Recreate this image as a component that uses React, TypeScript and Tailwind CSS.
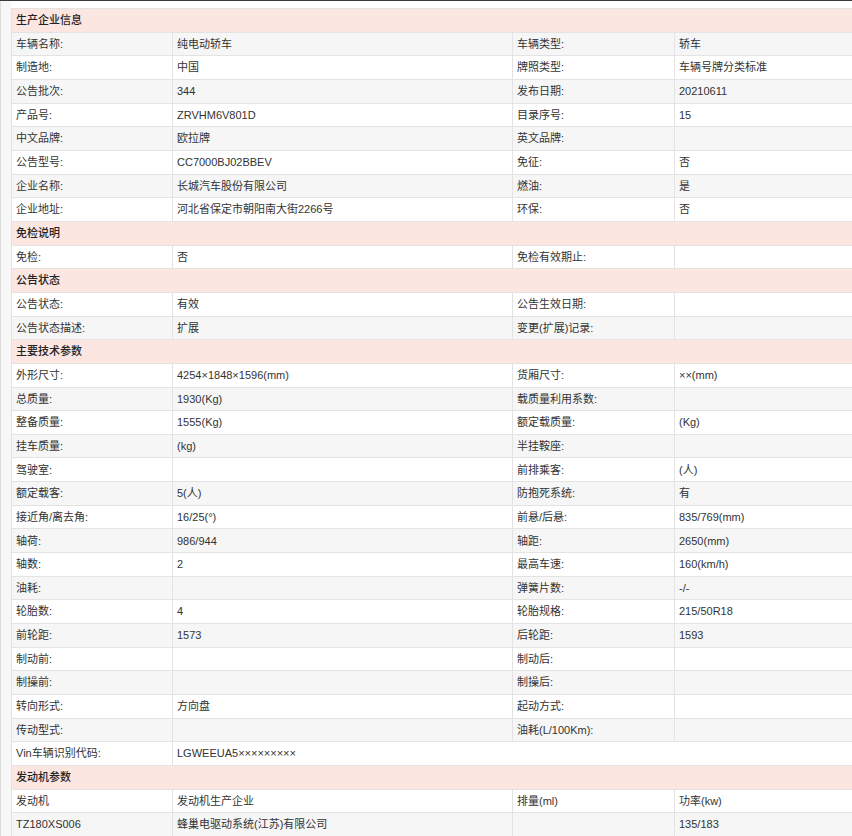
const S: [string, string[][], boolean][] = [
["生产企业信息", [["车辆名称:","纯电动轿车","车辆类型:","轿车"],["制造地:","中国","牌照类型:","车辆号牌分类标准"],["公告批次:","344","发布日期:","20210611"],["产品号:","ZRVHM6V801D","目录序号:","15"],["中文品牌:","欧拉牌","英文品牌:",""],["公告型号:","CC7000BJ02BBEV","免征:","否"],["企业名称:","长城汽车股份有限公司","燃油:","是"],["企业地址:","河北省保定市朝阳南大街2266号","环保:","否"]], true],
["免检说明", [["免检:","否","免检有效期止:",""]], false],
["公告状态", [["公告状态:","有效","公告生效日期:",""],["公告状态描述:","扩展","变更(扩展)记录:",""]], false],
["主要技术参数", [["外形尺寸:","4254×1848×1596(mm)","货厢尺寸:","××(mm)"],["总质量:","1930(Kg)","载质量利用系数:",""],["整备质量:","1555(Kg)","额定载质量:","(Kg)"],["挂车质量:","(kg)","半挂鞍座:",""],["驾驶室:","","前排乘客:","(人)"],["额定载客:","5(人)","防抱死系统:","有"],["接近角/离去角:","16/25(°)","前悬/后悬:","835/769(mm)"],["轴荷:","986/944","轴距:","2650(mm)"],["轴数:","2","最高车速:","160(km/h)"],["油耗:","","弹簧片数:","-/-"],["轮胎数:","4","轮胎规格:","215/50R18"],["前轮距:","1573","后轮距:","1593"],["制动前:","","制动后:",""],["制操前:","","制操后:",""],["转向形式:","方向盘","起动方式:",""],["传动型式:","","油耗(L/100Km):",""],["Vin车辆识别代码:","LGWEEUA5×××××××××"]], false],
["发动机参数", [["发动机","发动机生产企业","排量(ml)","功率(kw)"],["TZ180XS006","蜂巢电驱动系统(江苏)有限公司","","135/183"]], false],
];
export default function App() {
  return (
    <div className="w-[852px] h-[836px] overflow-hidden bg-white border-t border-[#3a3a3a] text-[11px] text-[#333]" style={{fontFamily:'"Liberation Sans","Noto Sans CJK SC",sans-serif'}}>
      <div className="flex">
        <div className="w-[11px] shrink-0 bg-[#f7f7f7] border-l border-[#ddd] h-[835px]"></div>
        <div className="flex-1 pt-[7px]">
          <table className="w-[845px] border-collapse table-fixed">
            <colgroup><col className="w-[161px]"/><col className="w-[340px]"/><col className="w-[162px]"/><col/></colgroup>
            <tbody>
              {S.map(([t, rows, g]) => [
                <tr key={t} className="h-[23.66px] bg-[#fbe6e2]"><td colSpan={4} className="border border-[#e3e3e3] px-[4px] font-medium text-[#222]">{t}</td></tr>,
                ...rows.map((r, i) => {
                  const gray = g ? i % 2 === 0 : i % 2 === 1;
                  return (
                    <tr key={t + i} className={"h-[23.66px] " + (gray ? "bg-[#f6f6f6]" : "bg-white")}>
                      {r.length === 2 ? <>
                        <td className="border border-[#e3e3e3] px-[4px]">{r[0]}</td>
                        <td colSpan={3} className="border border-[#e3e3e3] px-[4px]">{r[1]}</td>
                      </> : r.map((c, j) => <td key={j} className="border border-[#e3e3e3] px-[4px] whitespace-nowrap overflow-hidden">{c}</td>)}
                    </tr>
                  );
                }),
              ])}
            </tbody>
          </table>
        </div>
      </div>
    </div>
  );
}
